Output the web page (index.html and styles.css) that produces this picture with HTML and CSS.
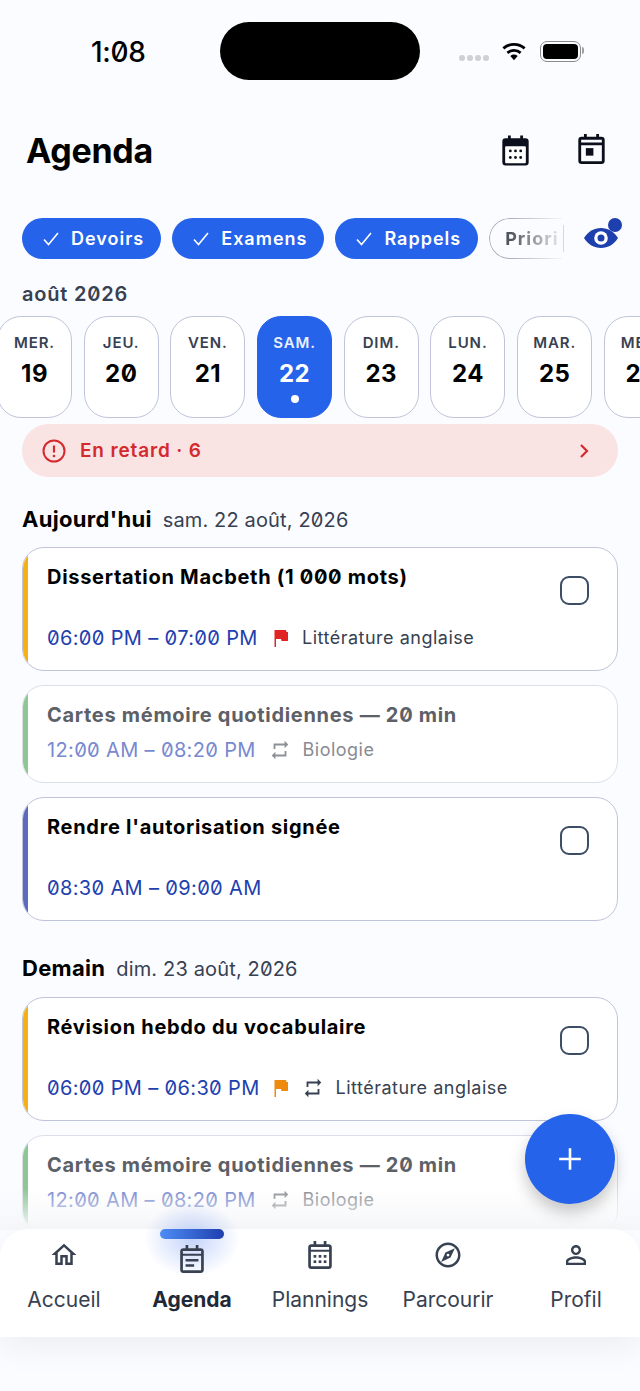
FILE: index.html
```html
<!DOCTYPE html>
<html lang="fr">
<head>
    <meta charset="UTF-8">
    <meta name="viewport" content="width=device-width, initial-scale=1.0">
    <title>Agenda</title>
    <link rel="stylesheet" href="styles.css">
</head>
<body>
    <div class="screen">
        <div class="status-bar">
            <span class="clock">1:08</span>
            <div class="island"></div>
            <div class="status-icons">
                <span class="signal"><i></i><i></i><i></i><i></i></span>
                <svg class="wifi" viewBox="0 0 24 18"><path d="M12 17.5l-3.4-3.9a5 5 0 0 1 6.8 0z"/><path d="M5.9 10.7a9.2 9.2 0 0 1 12.2 0" fill="none" stroke="#000" stroke-width="2.6"/><path d="M2.2 6.6a14.6 14.6 0 0 1 19.6 0" fill="none" stroke="#000" stroke-width="2.6"/></svg>
                <span class="battery"><i></i></span>
            </div>
        </div>

        <header class="top">
            <h1>Agenda</h1>
            <div class="top-actions">
                <svg class="top-icon" viewBox="0 0 30 34"><path d="M7 1.500h3v3h10v-3h3v3h2.500a3.500 3.500 0 0 1 3.500 3.500v22a3.500 3.500 0 0 1-3.500 3.500h-21A3.500 3.500 0 0 1 1 30V8a3.500 3.500 0 0 1 3.500-3.500H7z"/><rect x="4" y="13" width="22" height="18" rx="1" fill="#fff"/><g><circle cx="9.500" cy="18" r="1.500"/><circle cx="15" cy="18" r="1.500"/><circle cx="20.500" cy="18" r="1.500"/><circle cx="9.500" cy="25" r="1.500"/><circle cx="15" cy="25" r="1.500"/><circle cx="20.500" cy="25" r="1.500"/></g></svg>
                <svg class="top-icon" viewBox="0 0 30 34"><path d="M7 0h3v3h10V0h3v3h2.500A3.500 3.500 0 0 1 29 6.500v22a3.500 3.500 0 0 1-3.500 3.500h-21A3.500 3.500 0 0 1 1 28.500v-22A3.500 3.500 0 0 1 4.500 3H7zM4 6v3h22V6zM4 12v16.500c0 .3.200.500.500.500h21c.3 0 .500-.200.500-.500V12z" fill-rule="evenodd"/><rect x="9" y="15" width="8" height="8"/></svg>
            </div>
        </header>

        <div class="filters">
            <div class="chips">
                <span class="chip on"><svg viewBox="0 0 18 18"><path d="M2 9.500l4.500 5L16 3" fill="none" stroke="#fff" stroke-width="1.600"/></svg>Devoirs</span>
                <span class="chip on"><svg viewBox="0 0 18 18"><path d="M2 9.500l4.500 5L16 3" fill="none" stroke="#fff" stroke-width="1.600"/></svg>Examens</span>
                <span class="chip on"><svg viewBox="0 0 18 18"><path d="M2 9.500l4.500 5L16 3" fill="none" stroke="#fff" stroke-width="1.600"/></svg>Rappels</span>
                <span class="chip off">Priori</span>
            </div>
            <div class="chips-edge"></div>
            <span class="eye">
                <svg viewBox="0 0 34 20"><path d="M0 10C4 3.500 10 0 17 0s13 3.500 17 10c-4 6.500-10 10-17 10S4 16.500 0 10z"/><circle cx="17" cy="10" r="6.800" fill="#fff"/><circle cx="17" cy="10" r="3.500"/></svg>
                <i></i>
            </span>
        </div>

        <div class="month">août 2026</div>

        <div class="days">
            <div class="day"><span>MER.</span><b>19</b></div>
            <div class="day"><span>JEU.</span><b>20</b></div>
            <div class="day"><span>VEN.</span><b>21</b></div>
            <div class="day active"><span>SAM.</span><b>22</b><i></i></div>
            <div class="day"><span>DIM.</span><b>23</b></div>
            <div class="day"><span>LUN.</span><b>24</b></div>
            <div class="day"><span>MAR.</span><b>25</b></div>
            <div class="day"><span>MER.</span><b>26</b></div>
        </div>

        <div class="overdue">
            <svg class="overdue-icon" viewBox="0 0 24 24"><circle cx="12" cy="12" r="10.500" fill="none" stroke="#d42a2e" stroke-width="2"/><path d="M12 6.500v7" stroke="#d42a2e" stroke-width="2.200"/><circle cx="12" cy="17" r="1.300" fill="#d42a2e"/></svg>
            <span>En retard · 6</span>
            <svg class="chevron" viewBox="0 0 12 16"><path d="M3 2l6 6-6 6" fill="none" stroke="#d42a2e" stroke-width="2.200"/></svg>
        </div>

        <section class="group">
            <h2>Aujourd'hui <small>sam. 22 août, 2026</small></h2>

            <div class="card tall">
                <div class="bar amber"></div>
                <div class="card-body">
                    <div class="title">Dissertation Macbeth (1 000 mots)</div>
                    <div class="meta">
                        <span class="time">06:00 PM – 07:00 PM</span>
                        <svg class="flag" viewBox="0 0 16 18"><path d="M1.500 1H13l.5 2H15v9H8.500L8 10H3v8H1.500z" fill="#e02424"/></svg>
                        <span class="course">Littérature anglaise</span>
                    </div>
                </div>
                <div class="check"></div>
            </div>

            <div class="card done">
                <div class="bar green"></div>
                <div class="card-body">
                    <div class="title">Cartes mémoire quotidiennes — 20 min</div>
                    <div class="meta">
                        <span class="time">12:00 AM – 08:20 PM</span>
                        <svg class="repeat" viewBox="0 0 24 24"><path d="M7 7h10v3l4-4-4-4v3H5v6h2V7zm10 10H7v-3l-4 4 4 4v-3h12v-6h-2v4z"/></svg>
                        <span class="course">Biologie</span>
                    </div>
                </div>
            </div>

            <div class="card tall">
                <div class="bar indigo"></div>
                <div class="card-body">
                    <div class="title">Rendre l'autorisation signée</div>
                    <div class="meta">
                        <span class="time">08:30 AM – 09:00 AM</span>
                    </div>
                </div>
                <div class="check"></div>
            </div>
        </section>

        <section class="group">
            <h2>Demain <small>dim. 23 août, 2026</small></h2>

            <div class="card tall">
                <div class="bar amber"></div>
                <div class="card-body">
                    <div class="title">Révision hebdo du vocabulaire</div>
                    <div class="meta">
                        <span class="time">06:00 PM – 06:30 PM</span>
                        <svg class="flag" viewBox="0 0 16 18"><path d="M1.500 1H13l.5 2H15v9H8.500L8 10H3v8H1.500z" fill="#ee8a0c"/></svg>
                        <svg class="repeat solid" viewBox="0 0 24 24"><path d="M7 7h10v3l4-4-4-4v3H5v6h2V7zm10 10H7v-3l-4 4 4 4v-3h12v-6h-2v4z"/></svg>
                        <span class="course">Littérature anglaise</span>
                    </div>
                </div>
                <div class="check"></div>
            </div>

            <div class="card done">
                <div class="bar green"></div>
                <div class="card-body">
                    <div class="title">Cartes mémoire quotidiennes — 20 min</div>
                    <div class="meta">
                        <span class="time">12:00 AM – 08:20 PM</span>
                        <svg class="repeat" viewBox="0 0 24 24"><path d="M7 7h10v3l4-4-4-4v3H5v6h2V7zm10 10H7v-3l-4 4 4 4v-3h12v-6h-2v4z"/></svg>
                        <span class="course">Biologie</span>
                    </div>
                </div>
            </div>
        </section>

        <!-- fades the list out above the tab bar -->
        <div class="list-fade"></div>

        <div class="fab"><svg viewBox="0 0 24 24"><path d="M12 2v20M2 12h20" stroke="#fff" stroke-width="2.400"/></svg></div>

        <nav class="tabs">
            <div class="tab">
                <svg viewBox="0 0 24 24"><path d="M12 5.690l5 4.500V18h-2v-6H9v6H7v-7.810l5-4.500M12 3L2 12h3v8h6v-6h2v6h6v-8h3L12 3z"/></svg>
                <span>Accueil</span>
            </div>
            <div class="tab current">
                <i class="glow"></i>
                <i class="pill"></i>
                <svg viewBox="0 0 24 28"><path d="M6 1h2.500v3h7V1H18v3h2a3 3 0 0 1 3 3v17a3 3 0 0 1-3 3H4a3 3 0 0 1-3-3V7a3 3 0 0 1 3-3h2zM3.500 6.500V9h17V6.500zM3.500 11v13c0 .3.200.500.500.500h16c.3 0 .500-.200.500-.500V11zM6 14h12v2.300H6zm0 5h8v2.300H6z" fill-rule="evenodd"/></svg>
                <span>Agenda</span>
            </div>
            <div class="tab">
                <svg viewBox="0 0 24 28"><path d="M6 1h2.500v3h7V1H18v3h2a3 3 0 0 1 3 3v17a3 3 0 0 1-3 3H4a3 3 0 0 1-3-3V7a3 3 0 0 1 3-3h2zM3.500 6.500V9h17V6.500zM3.500 11v13c0 .3.200.500.500.500h16c.3 0 .500-.200.500-.500V11z" fill-rule="evenodd"/><rect x="6" y="14" width="2.500" height="2.500"/><rect x="10.750" y="14" width="2.500" height="2.500"/><rect x="15.500" y="14" width="2.500" height="2.500"/><rect x="6" y="19" width="2.500" height="2.500"/><rect x="10.750" y="19" width="2.500" height="2.500"/><rect x="15.500" y="19" width="2.500" height="2.500"/></svg>
                <span>Plannings</span>
            </div>
            <div class="tab">
                <svg viewBox="0 0 24 24"><path d="M12 2C6.480 2 2 6.480 2 12s4.480 10 10 10 10-4.480 10-10S17.520 2 12 2zm0 18c-4.410 0-8-3.590-8-8s3.590-8 8-8 8 3.590 8 8-3.590 8-8 8zm-5.500-2.500l7.510-3.490L17.500 6.500 9.990 9.990 6.500 17.500zm5.500-6.600c.610 0 1.100.490 1.100 1.100s-.490 1.100-1.100 1.100-1.100-.490-1.100-1.100.490-1.100 1.100-1.100z"/></svg>
                <span>Parcourir</span>
            </div>
            <div class="tab">
                <svg viewBox="0 0 24 24"><path d="M12 5.900c1.160 0 2.100.940 2.100 2.100s-.940 2.100-2.100 2.100S9.900 9.160 9.900 8s.940-2.100 2.100-2.100m0 9c2.970 0 6.100 1.460 6.100 2.100v1.100H5.900V17c0-.640 3.130-2.100 6.100-2.100M12 4C9.790 4 8 5.790 8 8s1.790 4 4 4 4-1.790 4-4-1.790-4-4-4zm0 9c-2.670 0-8 1.340-8 4v3h16v-3c0-2.660-5.330-4-8-4z"/></svg>
                <span>Profil</span>
            </div>
        </nav>
    </div>
</body>
</html>
```

FILE: styles.css
```css
* {
    box-sizing: border-box;
}
body {
    margin: 0;
    font-family: Inter, "Noto Sans", sans-serif;
    font-feature-settings: "zero" 1;
    color: #000;
    background: #fbfcff;
}
.screen {
    position: relative;
    width: 640px;
    height: 1391px;
    overflow: hidden;
    background: #fbfcff;
}

/* status bar */
.status-bar {
    display: flex;
    align-items: center;
    height: 102px;
    padding: 0 0 0 91px;
}
.clock {
    width: 129px;
    margin-top: 2px;
    font-size: 28px;
    font-weight: 500;
    letter-spacing: -0.3px;
}
.island {
    width: 200px;
    height: 58px;
    border-radius: 29px;
    background: #000;
}
.status-icons {
    display: flex;
    align-items: center;
    margin-left: 39px;
}
.signal {
    display: flex;
    gap: 2px;
    margin-top: 14px;
    margin-right: 12px;
}
.signal i {
    width: 6px;
    height: 6px;
    border-radius: 50%;
    background: #cfd0d2;
}
.wifi {
    width: 26px;
    height: 20px;
}
.battery {
    position: relative;
    width: 41px;
    height: 21px;
    margin-left: 13px;
    padding: 2px;
    border: 1.5px solid #8b8b8b;
    border-radius: 7px;
}
.battery i {
    display: block;
    height: 100%;
    border-radius: 4px;
    background: #000;
}
.battery::after {
    content: "";
    position: absolute;
    top: 5px;
    right: -4px;
    width: 2px;
    height: 7px;
    border-radius: 0 2px 2px 0;
    background: #a0a0a0;
}

/* header */
.top {
    display: flex;
    align-items: center;
    justify-content: space-between;
    height: 96px;
    padding: 0 34px 0 26px;
}
h1 {
    margin: 0;
    font-size: 34px;
    font-weight: 700;
    letter-spacing: -0.3px;
}
.top-actions {
    display: flex;
    gap: 47px;
}
.top-icon {
    width: 29px;
    height: 32px;
    fill: #0b0f1c;
}

/* filter chips */
.filters {
    display: flex;
    align-items: center;
    height: 41px;
    margin-top: 20px;
    padding-left: 22px;
}
.chips {
    display: flex;
    gap: 11px;
    width: 541px;
    overflow: hidden;
}
.chips-edge {
    width: 1px;
    height: 27px;
    background: #d5d8e0;
}
.chip {
    display: flex;
    align-items: center;
    flex: none;
    height: 41px;
    border-radius: 21px;
    font-size: 18px;
    font-weight: 600;
    letter-spacing: 1px;
}
.chip svg {
    width: 18px;
    height: 18px;
    margin-right: 11px;
}
.chip.on {
    padding: 0 17px 0 20px;
    background: #2563eb;
    color: #fff;
}
.chip.off {
    width: 73px;
    padding-left: 15px;
    border: 1.5px solid #aaaebe;
    border-right: 0;
    border-radius: 21px 0 0 21px;
    font-weight: 700;
    color: #50545c;
    -webkit-mask-image: linear-gradient(to right, #000 30%, rgba(0, 0, 0, 0.15) 95%);
    mask-image: linear-gradient(to right, #000 30%, rgba(0, 0, 0, 0.15) 95%);
}
.eye {
    position: relative;
    top: -1px;
    width: 34px;
    height: 20px;
    margin-left: 20px;
}
.eye svg {
    display: block;
    width: 34px;
    height: 20px;
    fill: #1e40af;
}
.eye i {
    position: absolute;
    top: -10px;
    left: 24px;
    width: 14px;
    height: 14px;
    border-radius: 50%;
    background: #1e40af;
}

/* month strip */
.month {
    margin-top: 23px;
    padding-left: 22px;
    height: 23px;
    font-size: 20px;
    font-weight: 600;
    letter-spacing: 0.8px;
    color: #374151;
}
.days {
    display: flex;
    gap: 11.700px;
    width: 660px;
    margin: 11px 0 0 -3px;
}
.day {
    display: flex;
    flex: none;
    flex-direction: column;
    align-items: center;
    position: relative;
    width: 75px;
    height: 102px;
    padding-top: 16px;
    border: 1.5px solid #bfc4da;
    border-radius: 24px;
    background: #fff;
}
.day span {
    font-size: 15px;
    font-weight: 600;
    letter-spacing: 0.9px;
    color: #374151;
}
.day b {
    margin-top: 7px;
    font-size: 24px;
    font-weight: 700;
    letter-spacing: 0.5px;
}
.day.active {
    border-color: #2563eb;
    background: #2563eb;
    color: #fff;
}
.day.active span {
    color: #eaf0ff;
}
.day.active i {
    width: 8px;
    height: 8px;
    margin-top: 7px;
    border-radius: 50%;
    background: #fff;
}

/* overdue banner */
.overdue {
    display: flex;
    align-items: center;
    height: 53px;
    margin: 6px 22px 0;
    padding: 0 28px 0 20px;
    border-radius: 27px;
    background: #f9e3e3;
    font-size: 19px;
    font-weight: 600;
    letter-spacing: 0.85px;
    color: #d42a2e;
}
.overdue-icon {
    width: 24px;
    height: 24px;
    margin-right: 14px;
}
.chevron {
    width: 12px;
    height: 16px;
    margin-left: auto;
}

/* agenda groups */
.group {
    padding: 0 22px;
}
h2 {
    display: flex;
    align-items: baseline;
    gap: 11px;
    height: 24px;
    margin: 30px 0 16px;
    font-size: 22px;
    font-weight: 700;
    line-height: 24px;
    letter-spacing: 0.3px;
}
.group + .group h2 {
    margin: 35px 0 17px;
}
h2 small {
    font-size: 20px;
    font-weight: 400;
    letter-spacing: 0.15px;
    color: #374151;
}
.card {
    display: flex;
    position: relative;
    margin-bottom: 14px;
    overflow: hidden;
    border: 1.5px solid #c0c5da;
    border-radius: 22px;
    background: #fff;
}
.card.tall {
    height: 124px;
}
.card.done {
    height: 98px;
    border-color: #dcdfea;
}
.bar {
    flex: none;
    width: 5px;
}
.amber {
    background: #f5b014;
}
.green {
    background: #8cc794;
}
.indigo {
    background: #5c6bc0;
}
.card-body {
    display: flex;
    flex: 1;
    flex-direction: column;
    padding: 16px 0 0 19px;
}
.title {
    font-size: 20px;
    font-weight: 700;
    line-height: 26px;
    letter-spacing: 0.7px;
}
.meta {
    display: flex;
    align-items: center;
    margin-top: 35px;
    font-size: 20px;
    line-height: 26px;
    letter-spacing: 0.35px;
}
.done .meta {
    margin-top: 9px;
}
.done .title {
    color: #5d6066;
}
.time {
    width: 211px;
    margin-right: 15px;
    white-space: nowrap;
    color: #1e40af;
}
.done .time {
    color: #7889cf;
}
.flag {
    width: 16px;
    height: 18px;
    margin-right: 13px;
}
.repeat {
    width: 22px;
    height: 22px;
    margin-left: -4px;
    margin-right: 11.500px;
    fill: #8d9096;
}
.repeat.solid {
    margin-left: 0;
    fill: #374151;
}
.course {
    font-size: 18px;
    letter-spacing: 0.5px;
    color: #374151;
}
.done .course {
    color: #888b92;
}
.check {
    position: absolute;
    top: 28px;
    right: 28px;
    width: 29px;
    height: 29px;
    border: 2.500px solid #3d4d66;
    border-radius: 9px;
}

.list-fade {
    position: absolute;
    left: 0;
    right: 0;
    top: 1188px;
    height: 42px;
    background: linear-gradient(to bottom, rgba(251, 252, 255, 0), #f6f7f9);
}

/* floating add button */
.fab {
    display: flex;
    align-items: center;
    justify-content: center;
    position: absolute;
    top: 1114px;
    left: 525px;
    width: 90px;
    height: 90px;
    border-radius: 50%;
    background: #2563eb;
    box-shadow: 0 8px 16px rgba(0, 0, 0, 0.22);
}
.fab svg {
    width: 26px;
    height: 26px;
}

/* tab bar */
.tabs {
    display: flex;
    position: absolute;
    top: 1229px;
    left: 0;
    width: 640px;
    height: 108px;
    border-radius: 28px 28px 0 0;
    background: #fff;
    box-shadow: 0 12px 30px rgba(20, 30, 60, 0.06);
}
.tab {
    display: flex;
    flex: 1;
    flex-direction: column;
    align-items: center;
    position: relative;
    padding-top: 11px;
    font-size: 21px;
    color: #374151;
}
.tab svg {
    width: 30px;
    height: 30px;
    fill: #374151;
}
.tab span {
    position: absolute;
    top: 58px;
}
.tab.current {
    color: #1f2937;
    font-weight: 700;
}
.tab.current svg {
    position: relative;
    margin-top: 4px;
}
.pill {
    position: absolute;
    top: 0;
    width: 64px;
    height: 10px;
    border-radius: 5px;
    background: linear-gradient(to right, #4f8cf5, #1e40af);
}
.glow {
    position: absolute;
    top: -28px;
    width: 96px;
    height: 76px;
    border-radius: 50%;
    background: radial-gradient(closest-side, rgba(59, 110, 240, 0.3), rgba(59, 110, 240, 0));
}
```
